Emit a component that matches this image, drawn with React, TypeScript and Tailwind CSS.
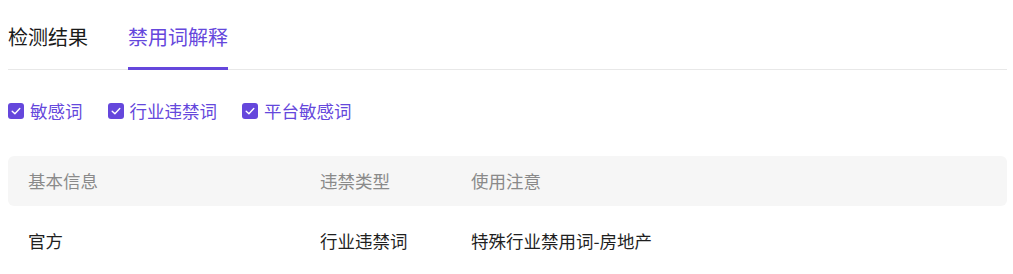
import React, { useState } from 'react';

const tabs = ['检测结果', '禁用词解释'];
const filters = ['敏感词', '行业违禁词', '平台敏感词'];

const rows = [{ source: '官方', type: '行业违禁词', note: '特殊行业禁用词-房地产' }];

const CheckBox: React.FC<{ checked: boolean }> = ({ checked }) => (
  <span
    className={`flex items-center justify-center w-4 h-4 rounded-[3px] ${
      checked ? 'bg-[#6547dc]' : 'border border-[#cfcfcf] bg-white'
    }`}
  >
    {checked && (
      <svg viewBox="0 0 16 16" className="w-4 h-4">
        <path d="M4.2 8.3 L6.9 10.8 L11.8 5.6" fill="none" stroke="#fff" strokeWidth="1.4" strokeLinecap="round" strokeLinejoin="round" />
      </svg>
    )}
  </span>
);

export default function App() {
  const [active, setActive] = useState(1);
  const [checked, setChecked] = useState([true, true, true]);

  return (
    <div className="pl-2 pr-[6px] bg-white font-['Noto_Sans_CJK_SC','Noto_Sans',sans-serif]">
      {/* Tabs */}
      <div className="flex gap-10 h-[70px] border-b border-[#e8e8e8]">
        {tabs.map((t, i) => (
          <button
            key={t}
            onClick={() => setActive(i)}
            className={`relative flex items-center pt-1 text-[20px] leading-none ${
              active === i ? 'text-[#6547dc]' : 'text-[#1a1a1a]'
            }`}
          >
            {t}
            {active === i && (
              <span className="absolute left-0 right-0 bottom-[-1px] h-[3px] bg-[#6547dc]" />
            )}
          </button>
        ))}
      </div>

      {/* Filters */}
      <div className="flex items-center gap-[25px] mt-[29px] h-6">
        {filters.map((f, i) => (
          <label
            key={f}
            className="flex items-center gap-[6px] cursor-pointer"
            onClick={() => setChecked(c => c.map((v, j) => (j === i ? !v : v)))}
          >
            <CheckBox checked={checked[i]} />
            <span className="text-[17.5px] leading-none text-[#6547dc]">{f}</span>
          </label>
        ))}
      </div>

      {/* Table */}
      <div className="mt-[33px]">
        <div className="grid grid-cols-[292px_151px_1fr] items-center h-[50px] pl-5 rounded-md bg-[#f6f6f6] text-[17.5px] leading-none text-[#8a8a8a]">
          <span>基本信息</span>
          <span>违禁类型</span>
          <span>使用注意</span>
        </div>
        {rows.map(r => (
          <div
            key={r.note}
            className="grid grid-cols-[292px_151px_1fr] items-center h-[70px] pl-5 text-[17.5px] leading-none text-[#1f1f1f]"
          >
            <span>{r.source}</span>
            <span>{r.type}</span>
            <span>{r.note}</span>
          </div>
        ))}
      </div>
    </div>
  );
}
